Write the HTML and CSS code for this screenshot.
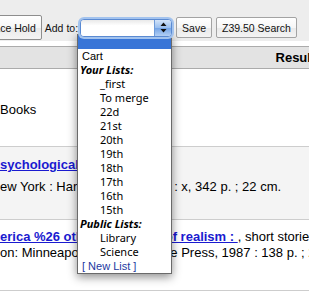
FILE: index.html
```html
<!doctype html>
<html lang="en">
 <head>
  <meta charset="UTF-8">
  <meta name="viewport" content="width=device-width, initial-scale=1">
  <link rel="stylesheet" href="styles.css">
  <title>Results</title>
 </head>
 <body>
  <div class="toolbar">
    <button class="btn btn-hold">Place Hold</button>
    <span class="addto">Add to:</span>
    <div class="select">
      <span class="select-value"></span>
      <span class="select-arrow">
        <svg width="7" height="11" viewBox="0 0 7 11"><path d="M3.5 0.5 L6.5 4 L0.5 4 Z M0.5 7 L6.5 7 L3.5 10.5 Z" fill="#111"/></svg>
      </span>
    </div>
    <button class="btn btn-save">Save</button>
    <button class="btn btn-z">Z39.50 Search</button>
  </div>

  <!-- open popup of the "Add to" select -->
  <ul class="popup">
    <li class="opt opt-selected"></li>
    <li class="opt">Cart</li>
    <li class="group">Your Lists:</li>
    <li class="opt opt-sub">_first</li>
    <li class="opt opt-sub">To merge</li>
    <li class="opt opt-sub">22d</li>
    <li class="opt opt-sub">21st</li>
    <li class="opt opt-sub">20th</li>
    <li class="opt opt-sub">19th</li>
    <li class="opt opt-sub">18th</li>
    <li class="opt opt-sub">17th</li>
    <li class="opt opt-sub">16th</li>
    <li class="opt opt-sub">15th</li>
    <li class="group">Public Lists:</li>
    <li class="opt opt-sub">Library</li>
    <li class="opt opt-sub">Science</li>
    <li class="opt opt-new">[ New List ]</li>
  </ul>

  <div class="results">
    <div class="results-head">Results</div>
    <div class="row row-1">
      <div class="line">Books</div>
    </div>
    <div class="row row-2">
      <div class="line"><a href="#">sychological novel</a></div>
      <div class="line line-gap">ew York : Harper &amp; Row 1967 : x, 342 p. ; 22 cm.</div>
    </div>
    <div class="row row-3">
      <div class="line"><a href="#">erica %26 other stories, in of realism : </a>, short stories</div>
      <div class="line">on: Minneapolis: Coffee House Press, 1987 : 138 p. ; 22 cm.</div>
    </div>
  </div>
 </body>
</html>
```

FILE: styles.css
```css
html, body{
  overflow: hidden;
}
body{
  margin: 0;
  position: relative;
  font-family: "Liberation Sans", Arial, sans-serif;
  font-size: 13px;
  color: #000;
  background: #fff;
}

/* toolbar */
.toolbar{
  display: flex;
  align-items: center;
  height: 25px;
  padding: 15px 0 1px;
  background: #ededed;
  white-space: nowrap;
}
.btn{
  flex: none;
  margin: 0;
  height: 21px;
  padding: 0 5px;
  font-family: "Liberation Sans", Arial, sans-serif;
  font-size: 10.5px;
  color: #111;
  border: 1px solid #a3a3a3;
  border-radius: 2px;
  background: linear-gradient(#ffffff, #f6f6f6 50%, #e9e9e9 51%, #f4f4f4);
}
.btn-hold{
  height: 25px;
  margin-left: -21px;
  border-color: #8e8e8e;
}
.addto{
  margin-left: 3px;
  font-size: 10.5px;
  color: #111;
}
.btn-save{
  margin-left: 4px;
}
.btn-z{
  margin-left: 4px;
}

/* focused select */
.select{
  flex: none;
  position: relative;
  z-index: 3;
  display: flex;
  width: 92px;
  height: 18px;
  margin-left: 2px;
  border: 1px solid #5a8ad2;
  border-radius: 4px;
  box-shadow: 0 0 0 2px #a3c3ee;
  background: #fff;
  box-sizing: border-box;
  overflow: hidden;
}
.select-value{
  flex: 1;
  background: linear-gradient(#e9e9e9, #ffffff 35%);
}
.select-arrow{
  width: 16px;
  display: flex;
  align-items: center;
  justify-content: center;
  background: linear-gradient(#d3e4f9, #97bdee 50%, #74a4e6 51%, #b2cff4);
  border-left: 1px solid #6f9bd9;
}

/* popup list */
.popup{
  position: absolute;
  z-index: 2;
  left: 77px;
  top: 34px;
  width: 95px;
  margin: 0;
  padding: 0;
  list-style: none;
  background: #fff;
  border: 1px solid #6a6a6a;
  box-sizing: border-box;
  box-shadow: 0 3px 9px rgba(0, 0, 0, 0.45);
}
.opt, .group{
  height: 14px;
  line-height: 14px;
  font-size: 11px;
  padding-left: 4px;
  white-space: nowrap;
}
.opt-selected{
  background: #3875d7;
}
.group{
  padding-left: 2px;
  font-family: "Noto Sans", "DejaVu Sans", sans-serif;
  font-weight: bold;
  font-style: italic;
}
.opt-sub{
  padding-left: 22px;
  font-family: "Noto Sans", "DejaVu Sans", sans-serif;
}
.opt-new{
  color: #22389f;
}

/* results */
.results{
  width: 598px;
  margin-top: 5px;
}
.results-head{
  height: 21px;
  line-height: 21px;
  text-align: center;
  font-weight: bold;
  background: #e3e3e3;
  border-top: 1px solid #ababab;
  border-bottom: 1px solid #ababab;
}
.row{
  border-bottom: 1px solid #cdcdcd;
  white-space: nowrap;
}
.line{
  line-height: 16px;
}
.row-1{
  padding: 33px 0 28px;
}
.row-2{
  padding: 10px 0 24px;
  background: #f4f4f4;
}
.row-2 .line-gap{
  margin-top: 6px;
}
.row-3{
  padding: 9px 0 29px;
}
a{
  color: #1a1ad0;
  font-weight: bold;
}
```
